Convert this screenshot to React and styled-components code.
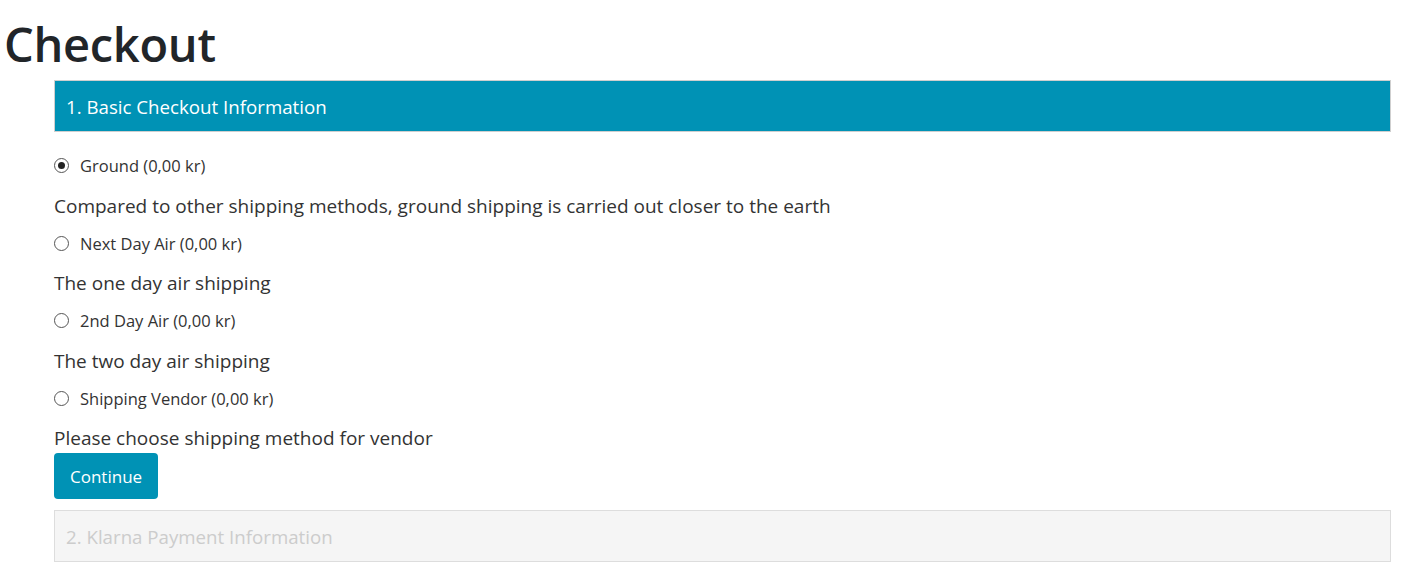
import styled, { createGlobalStyle } from 'styled-components'

const GlobalStyle = createGlobalStyle`
  html, body {
    margin: 0;
    padding: 0;
    background: #ffffff;
    font-family: 'Open Sans', 'Noto Sans', sans-serif;
    color: #333333;
  }
`

const colors = {
  primary: '#0092b5',
  heading: '#212529',
  text: '#333333',
  muted: '#cccccc',
  panelBorder: '#dddddd',
}

const Page = styled.div`
  padding: 0 11px 0 4px;
`

const Title = styled.h1`
  margin: 0 0 8px;
  padding-top: 16px;
  font-size: 47px;
  font-weight: 600;
  line-height: 56px;
  color: ${colors.heading};
  letter-spacing: -0.3px;
`

const Content = styled.div`
  margin-left: 50px;
  display: flex;
  flex-direction: column;
`

const StepHeader = styled.div`
  height: 50px;
  display: flex;
  align-items: center;
  padding: 0 11px;
  font-size: 18.7px;
  border: 1px solid ${({ $active }) => ($active ? '#cfcfcf' : colors.panelBorder)};
  background: ${({ $active }) => ($active ? colors.primary : '#f5f5f5')};
  color: ${({ $active }) => ($active ? '#ffffff' : colors.muted)};
`

const Methods = styled.div`
  display: flex;
  flex-direction: column;
  padding-top: 21.5px;
`

const Method = styled.div`
  display: flex;
  flex-direction: column;
  margin-bottom: 13.5px;
  &:last-child {
    margin-bottom: 3px;
  }
`

const RadioRow = styled.label`
  display: flex;
  align-items: center;
  gap: 11px;
  height: 24px;
  font-size: 16.5px;
  color: ${colors.text};
  margin-bottom: 16px;
`

const Radio = styled.span`
  width: 13px;
  height: 13px;
  border: 1px solid #555555;
  border-radius: 50%;
  display: flex;
  align-items: center;
  justify-content: center;
  box-sizing: content-box;
  &::after {
    content: '';
    width: 7px;
    height: 7px;
    border-radius: 50%;
    background: ${({ $checked }) => ($checked ? '#222222' : 'transparent')};
  }
`

const Description = styled.div`
  font-size: 19px;
  line-height: 24px;
  color: ${colors.text};
`

const ContinueButton = styled.button`
  align-self: flex-start;
  height: 46px;
  padding: 0 16px;
  border: none;
  border-radius: 4px;
  background: ${colors.primary};
  color: #ffffff;
  font-family: inherit;
  font-size: 17px;
  margin-bottom: 11px;
`

const methods = [
  {
    name: 'Ground (0,00 kr)',
    description:
      'Compared to other shipping methods, ground shipping is carried out closer to the earth',
    checked: true,
  },
  { name: 'Next Day Air (0,00 kr)', description: 'The one day air shipping' },
  { name: '2nd Day Air (0,00 kr)', description: 'The two day air shipping' },
  {
    name: 'Shipping Vendor (0,00 kr)',
    description: 'Please choose shipping method for vendor',
  },
]

function App() {
  return (
    <>
      <GlobalStyle />
      <Page>
        <Title>Checkout</Title>
        <Content>
          <StepHeader $active>1. Basic Checkout Information</StepHeader>
          <Methods>
            {methods.map((method) => (
              <Method key={method.name}>
                <RadioRow>
                  <Radio $checked={method.checked} />
                  {method.name}
                </RadioRow>
                <Description>{method.description}</Description>
              </Method>
            ))}
          </Methods>
          <ContinueButton>Continue</ContinueButton>
          <StepHeader>2. Klarna Payment Information</StepHeader>
        </Content>
      </Page>
    </>
  )
}

export default App
